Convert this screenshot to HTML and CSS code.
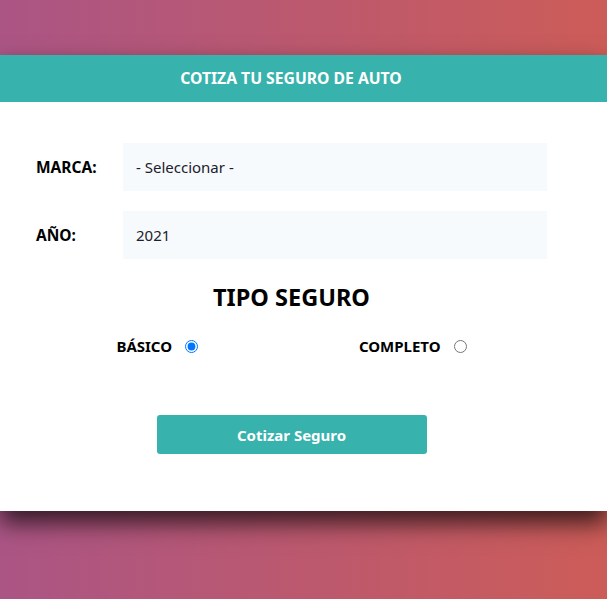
FILE: index.html
```html
<!DOCTYPE html>
<html lang="es">
<head>
<meta charset="utf-8">
<title>Cotizador</title>
<link rel="stylesheet" href="styles.css">
</head>
<body>
<div class="page">
  <div class="card">
    <header class="header">
      <h1 class="header-title">COTIZA TU SEGURO DE AUTO</h1>
    </header>
    <form class="form">
      <div class="field">
        <label class="field-label">MARCA:</label>
        <select class="field-select">
          <option>- Seleccionar -</option>
        </select>
      </div>
      <div class="field">
        <label class="field-label">AÑO:</label>
        <select class="field-select">
          <option>2021</option>
        </select>
      </div>
      <h2 class="section-title">TIPO SEGURO</h2>
      <div class="radios">
        <label class="radio-item"><span>BÁSICO</span><input type="radio" name="plan" value="basico" checked></label>
        <label class="radio-item"><span>COMPLETO</span><input type="radio" name="plan" value="completo"></label>
      </div>
      <div class="actions">
        <button type="button" class="btn">Cotizar Seguro</button>
      </div>
    </form>
  </div>
</div>
</body>
</html>
```
FILE: styles.css
```css
* { box-sizing: border-box; }
html, body { margin: 0; padding: 0; }
body {
  font-family: "Noto Sans", "Open Sans", sans-serif;
  background: linear-gradient(to right, #ab5585, #cc5c58);
  min-height: 599px;
  color: #000;
}
.page {
  padding-top: 55px;
}
.card {
  background: #fff;
  box-shadow: 0 12px 22px rgba(0, 0, 0, 0.7);
}
.header {
  background: #38b2ac;
}
.header-title {
  width: 582px;
  margin: 0;
  text-align: center;
  color: #fff;
  font-size: 15.7px;
  font-weight: 700;
  line-height: 23px;
  padding: 12px 0;
}
.form {
  width: 582px;
  padding: 41px 35px 57px 36px;
}
.field {
  display: flex;
  align-items: center;
  margin-bottom: 20px;
}
.field-label {
  flex: 0 0 87px;
  font-weight: 700;
  font-size: 15.5px;
}
.field-select {
  flex: 1;
  height: 48px;
  border: none;
  background: #f7fafc;
  -webkit-appearance: none;
  appearance: none;
  font-family: inherit;
  font-size: 15px;
  color: #1a202c;
  padding: 0 13px;
  border-radius: 0;
}
.section-title {
  margin: 0;
  padding-top: 2px;
  text-align: center;
  font-size: 23.5px;
  font-weight: 700;
  line-height: 32px;
}
.radios {
  display: flex;
  justify-content: space-around;
  margin-top: 22px;
}
.radio-item {
  display: flex;
  align-items: center;
  gap: 13px;
  font-weight: 700;
  font-size: 15px;
  line-height: 22px;
}
.radio-item input {
  margin: 0;
  width: 13px;
  height: 13px;
}
.actions {
  display: flex;
  justify-content: center;
  margin-top: 58px;
}
.btn {
  width: 270px;
  height: 39px;
  border: none;
  border-radius: 3px;
  background: #38b2ac;
  color: #fff;
  font-family: inherit;
  font-size: 15px;
  font-weight: 700;
}
```
